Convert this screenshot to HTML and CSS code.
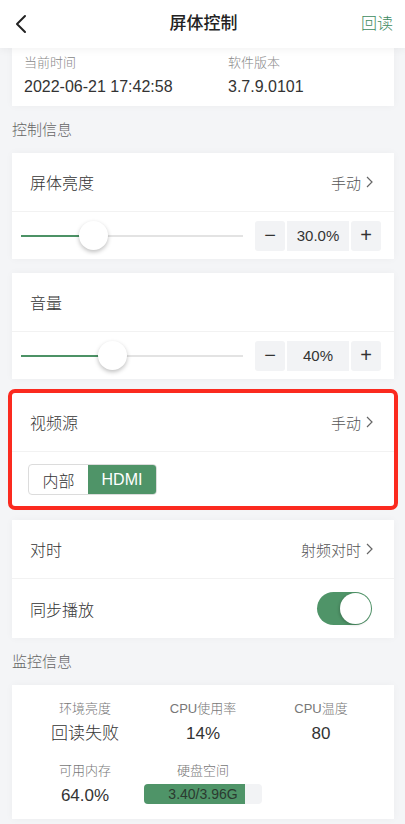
FILE: index.html
```html
<!DOCTYPE html>
<html lang="zh-CN">
    <head>
        <meta charset="UTF-8">
        <meta name="viewport" content="width=device-width, initial-scale=1.0">
        <title>屏体控制</title>
        <link rel="stylesheet" href="styles.css">
    </head>
    <body>
        <header class="topbar">
            <span class="back">
                <svg width="14" height="20" viewBox="0 0 14 20"><path d="M11 2 L3 10 L11 18" fill="none" stroke="#222" stroke-width="2" stroke-linecap="round" stroke-linejoin="round"/></svg>
            </span>
            <h1 class="title">屏体控制</h1>
            <span class="action">回读</span>
        </header>

        <section class="card info">
            <div class="info-item">
                <div class="info-label">当前时间</div>
                <div class="info-value">2022-06-21 17:42:58</div>
            </div>
            <div class="info-item">
                <div class="info-label">软件版本</div>
                <div class="info-value">3.7.9.0101</div>
            </div>
        </section>

        <div class="section-title">控制信息</div>

        <section class="card">
            <div class="row">
                <span class="row-name">屏体亮度</span>
                <span class="row-value">手动<svg class="chev" width="7" height="12" viewBox="0 0 7 12"><path d="M1 1 L6 6 L1 11" fill="none" stroke="#666" stroke-width="1.2"/></svg></span>
            </div>
            <div class="slider-row">
                <div class="slider">
                    <div class="track"></div>
                    <div class="track-fill" style="width: 72.9px"></div>
                    <div class="thumb" style="left: 58px"></div>
                </div>
                <div class="stepper">
                    <span class="step-btn">−</span>
                    <span class="step-val">30.0%</span>
                    <span class="step-btn">+</span>
                </div>
            </div>
        </section>

        <section class="card">
            <div class="row">
                <span class="row-name">音量</span>
            </div>
            <div class="slider-row">
                <div class="slider">
                    <div class="track"></div>
                    <div class="track-fill" style="width: 91.7px"></div>
                    <div class="thumb" style="left: 77.2px"></div>
                </div>
                <div class="stepper">
                    <span class="step-btn">−</span>
                    <span class="step-val">40%</span>
                    <span class="step-btn">+</span>
                </div>
            </div>
        </section>

        <section class="card highlight">
            <div class="row">
                <span class="row-name">视频源</span>
                <span class="row-value">手动<svg class="chev" width="7" height="12" viewBox="0 0 7 12"><path d="M1 1 L6 6 L1 11" fill="none" stroke="#666" stroke-width="1.2"/></svg></span>
            </div>
            <div class="segment-row">
                <div class="segment">
                    <span class="seg">内部</span>
                    <span class="seg seg-on">HDMI</span>
                </div>
            </div>
        </section>

        <section class="card card-end">
            <div class="row">
                <span class="row-name">对时</span>
                <span class="row-value">射频对时<svg class="chev" width="7" height="12" viewBox="0 0 7 12"><path d="M1 1 L6 6 L1 11" fill="none" stroke="#666" stroke-width="1.2"/></svg></span>
            </div>
            <div class="row row-last">
                <span class="row-name">同步播放</span>
                <span class="switch"><span class="knob"></span></span>
            </div>
        </section>

        <div class="section-title">监控信息</div>

        <section class="card monitor">
            <div class="stat">
                <div class="stat-label">环境亮度</div>
                <div class="stat-value">回读失败</div>
            </div>
            <div class="stat">
                <div class="stat-label">CPU使用率</div>
                <div class="stat-value">14%</div>
            </div>
            <div class="stat">
                <div class="stat-label">CPU温度</div>
                <div class="stat-value">80</div>
            </div>
            <div class="stat">
                <div class="stat-label">可用内存</div>
                <div class="stat-value">64.0%</div>
            </div>
            <div class="stat">
                <div class="stat-label">硬盘空间</div>
                <div class="stat-value">
                    <div class="disk">
                        <div class="disk-fill" style="width: 85.9%"></div>
                        <span class="disk-text">3.40/3.96G</span>
                    </div>
                </div>
            </div>
        </section>
    </body>
</html>
```

FILE: styles.css
```css
* {
    box-sizing: border-box;
}

body {
    margin: 0;
    background-color: #f4f5f7;
    font-family: "Liberation Sans", "Noto Sans CJK SC", sans-serif;
    font-weight: 300;
    color: #333;
}

.topbar {
    position: relative;
    z-index: 2;
    height: 48px;
    display: grid;
    grid-template-columns: 1fr auto 1fr;
    align-items: center;
    padding: 0 12px 0 14px;
    background-color: #fff;
    box-shadow: 0 2px 8px rgba(0, 0, 0, 0.05);
}

.back {
    display: flex;
    align-items: center;
}

.title {
    margin: 0;
    font-size: 17px;
    font-weight: 500;
    color: #222;
    line-height: 24px;
}

.action {
    justify-self: end;
    font-size: 16px;
    color: #3d8a5e;
    line-height: 24px;
}

.card {
    background-color: #fff;
    margin: 0 11px 14px 12px;
    box-shadow: 0 0 8px rgba(0, 0, 0, 0.035);
}

.card-end {
    margin-bottom: 0;
}

.info {
    display: grid;
    grid-template-columns: 204px 1fr;
    padding: 6px 12px 8px;
    margin-bottom: 0;
}

.info-label {
    font-size: 13px;
    line-height: 18px;
    color: #888;
}

.info-value {
    margin-top: 4px;
    font-size: 16px;
    line-height: 22px;
    color: #333;
}

.section-title {
    padding: 12px 12px;
    font-size: 15px;
    line-height: 23px;
    color: #666;
}

.row {
    height: 59px;
    display: flex;
    align-items: center;
    justify-content: space-between;
    padding: 0 21px 0 18px;
    border-bottom: 1px solid #f2f2f2;
}

.row-last {
    border-bottom: none;
}

.row-name {
    font-size: 16px;
    color: #333;
}

.row-value {
    display: flex;
    align-items: center;
    gap: 5px;
    font-size: 15px;
    color: #555;
}

.slider-row {
    height: 47px;
    display: flex;
    align-items: center;
    padding: 0 13px 0 9px;
}

.slider {
    position: relative;
    width: 222px;
    height: 30px;
}

.track,
.track-fill {
    position: absolute;
    left: 0;
    top: 14px;
    height: 2px;
}

.track {
    width: 100%;
    background-color: #e3e3e3;
}

.track-fill {
    background-color: #4c9265;
}

.thumb {
    position: absolute;
    top: 0;
    width: 29px;
    height: 29px;
    border-radius: 50%;
    background-color: #fff;
    box-shadow: 0 2px 4px rgba(0, 0, 0, 0.25);
}

.stepper {
    margin-left: auto;
    display: flex;
    gap: 2px;
    height: 30px;
}

.step-btn,
.step-val {
    display: flex;
    align-items: center;
    justify-content: center;
    background-color: #f2f3f5;
    color: #333;
}

.step-btn {
    width: 30px;
    font-size: 20px;
    border-radius: 3px;
}

.step-val {
    width: 62px;
    font-size: 15px;
}

.highlight {
    outline: 4px solid #fb2a1f;
    border-radius: 3px;
}

.segment-row {
    height: 54px;
    padding: 12px 16px 0;
}

.segment {
    display: inline-flex;
    height: 31px;
    border-radius: 4px;
    overflow: hidden;
    border: 1px solid #dcdcdc;
}

.seg {
    display: flex;
    align-items: center;
    justify-content: center;
    width: 59px;
    font-size: 16px;
    color: #333;
}

.seg-on {
    width: 68px;
    background-color: #4f9468;
    color: #fff;
}

.switch {
    position: relative;
    width: 55px;
    height: 33px;
    border-radius: 17px;
    background-color: #4f9468;
    margin-right: 1px;
}

.knob {
    position: absolute;
    right: 1px;
    top: 1px;
    width: 31px;
    height: 31px;
    border-radius: 50%;
    background-color: #fff;
    box-shadow: -1px 1px 3px rgba(0, 0, 0, 0.2);
}

.monitor {
    display: grid;
    grid-template-columns: repeat(3, 118px);
    row-gap: 16px;
    padding: 15px 14px 11px;
    margin-bottom: 7px;
}

.stat {
    text-align: center;
}

.stat-label {
    font-size: 13px;
    line-height: 18px;
    color: #777;
}

.stat-value {
    margin-top: 4px;
    font-size: 17px;
    line-height: 24px;
    color: #333;
}

.disk {
    position: relative;
    height: 20px;
    margin-top: 2px;
    border-radius: 4px;
    overflow: hidden;
    background-color: #f2f3f5;
}

.disk-fill {
    height: 100%;
    background-color: #4f9468;
}

.disk-text {
    position: absolute;
    left: 0;
    right: 0;
    top: 0;
    font-size: 14px;
    line-height: 20px;
    color: #2b3a30;
}
```
